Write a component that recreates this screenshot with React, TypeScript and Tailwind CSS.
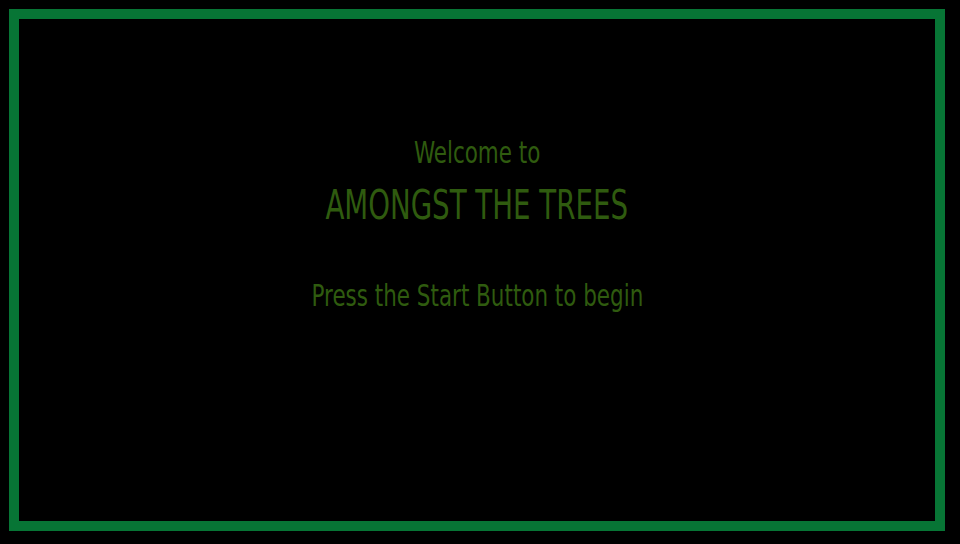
export default function App() {
  const font = { fontFamily: '"Liberation Sans Narrow", "DejaVu Sans Condensed", sans-serif' };
  return (
    <div className="w-[960px] h-[544px] bg-black p-[9px]">
      <div className="w-[936px] h-[522px] border-[10px] border-[#077535] flex flex-col items-center pt-[118px] text-[#2f5b0f]" style={font}>
        <div className="text-[31px] leading-none scale-x-[0.77]">Welcome to</div>
        <div className="text-[41px] leading-none mt-[17px] scale-x-[0.75]">AMONGST THE TREES</div>
        <div className="text-[31px] leading-none mt-[54px] scale-x-[0.77]">Press the Start Button to begin</div>
      </div>
    </div>
  );
}
